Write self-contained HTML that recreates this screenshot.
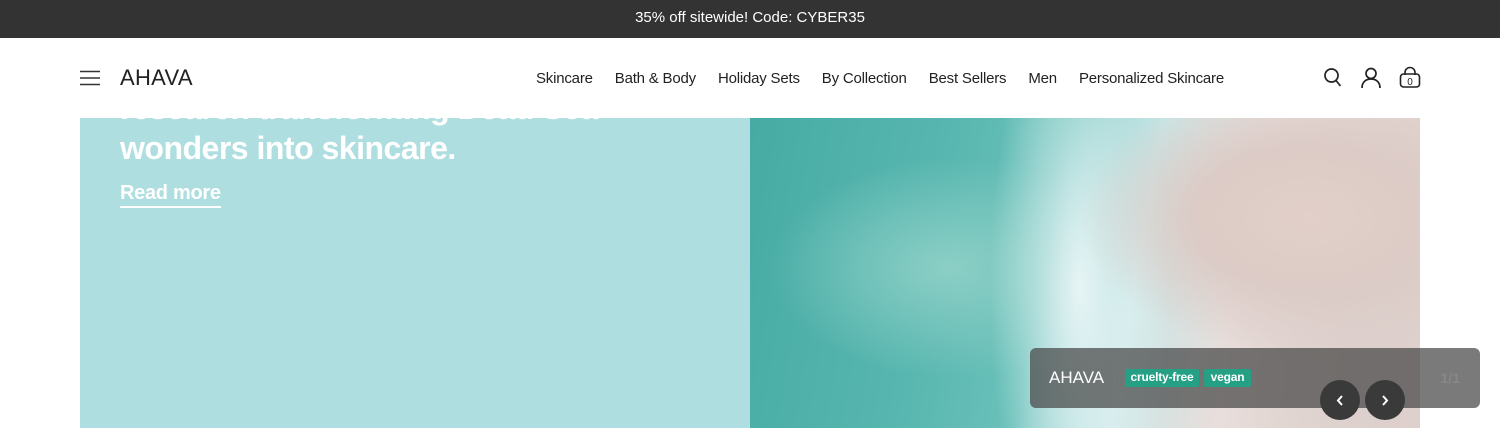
<!DOCTYPE html>
<html><head><meta charset="utf-8"><style>
*{margin:0;padding:0;box-sizing:border-box}
body{width:1500px;height:428px;overflow:hidden;background:#fff;font-family:"Liberation Sans",Arial,sans-serif;position:relative}
.bar{height:38px;background:#333;color:#fff;font-size:15px;text-align:center;line-height:35px}
.hdr{position:absolute;top:38px;left:0;width:1500px;height:80px;background:#fff;z-index:5}
.hdr .nav{position:absolute;top:32px;left:536px;font-size:15px;color:#222;white-space:nowrap;letter-spacing:-0.2px}
.hdr .nav span{margin-right:22px}
.logo{position:absolute;left:120px;top:27px;font-size:22px;letter-spacing:0.3px;color:#222;font-weight:300}
.left{position:absolute;left:80px;top:38px;width:670px;height:390px;background:#afdee0}
.h{position:absolute;left:120px;top:88px;color:#fff;font-weight:bold;font-size:32px;line-height:40px;letter-spacing:-0.5px}
.rm{position:absolute;left:120px;top:183px;color:#fff;font-weight:bold;font-size:20px;border-bottom:2px solid #fff;line-height:21px;padding-bottom:2px;letter-spacing:-0.3px}
.img{position:absolute;left:750px;top:38px;width:670px;height:390px;overflow:hidden;
background:
radial-gradient(ellipse 230px 140px at 560px 180px,#e2cfc9 0%,#dccbc6 50%,rgba(225,215,215,0) 100%),
radial-gradient(ellipse 150px 260px at 620px 330px,#dcd0cc 0%,rgba(220,210,210,0) 100%),
radial-gradient(ellipse 90px 320px at 330px 250px,rgba(240,248,250,.9) 0%,rgba(230,240,240,0) 100%),
radial-gradient(ellipse 180px 110px at 200px 230px,#8ccfc6 0%,rgba(0,0,0,0) 100%),
linear-gradient(100deg,#45aaa3 0%,#58b7b0 30%,#6bc1ba 45%,#c8e6e6 58%,#e8dedb 72%,#e0d0cc 100%)}
.card{position:absolute;left:1030px;top:348px;width:450px;height:60px;background:rgba(70,70,70,.72);border-radius:6px}
.card .b{position:absolute;left:19px;top:20px;color:#fff;font-size:17px}
.tag{position:absolute;top:21px;height:18px;background:#26a085;color:#fff;font-size:12px;font-weight:bold;line-height:17px;text-align:center;border-radius:2px;letter-spacing:-0.2px}
.pg{position:absolute;right:20px;top:22px;color:#888;font-size:14px;font-weight:bold}
.btn{position:absolute;top:380px;width:40px;height:40px;border-radius:50%;background:#3a3a3a}
</style></head><body>
<div class="bar">35% off sitewide! Code: CYBER35</div>
<div class="left"></div>
<div class="h">research transforming Dead Sea<br>wonders into skincare.</div>
<div class="rm">Read more</div>
<div class="img"></div>
<div class="hdr">
<svg style="position:absolute;left:80px;top:32px" width="20" height="16"><path d="M0 1.5H20M0 8H20M0 14.5H20" stroke="#333" stroke-width="1.6"/></svg>
<div class="logo">AHAVA</div>
<div class="nav"><span>Skincare</span><span>Bath &amp; Body</span><span>Holiday Sets</span><span>By Collection</span><span>Best Sellers</span><span>Men</span><span style="margin:0">Personalized Skincare</span></div>
<svg style="position:absolute;left:1323px;top:29px" width="20" height="22" fill="none" stroke="#222" stroke-width="1.7"><circle cx="8.5" cy="8.5" r="6.5"/><path d="M13 13.5L17.5 19"/></svg>
<svg style="position:absolute;left:1360px;top:29px" width="22" height="22" fill="none" stroke="#222" stroke-width="1.7"><circle cx="11" cy="6.5" r="5"/><path d="M2 21C2 15 6 12 11 12S20 15 20 21"/></svg>
<svg style="position:absolute;left:1398px;top:28px" width="24" height="24" fill="none" stroke="#222" stroke-width="1.6"><path d="M7 9V6.5a5 5 0 0 1 10 0V9"/><rect x="2.5" y="8" width="19" height="13" rx="3"/><text x="12" y="19" font-size="10" font-family="Liberation Sans" fill="#222" stroke="none" text-anchor="middle">0</text></svg>
</div>
<div class="card"><div class="b">AHAVA</div><div style="position:absolute;left:84px;top:22px;width:1px;height:16px;background:#777"></div>
<div class="tag" style="left:95px;width:74px">cruelty-free</div><div class="tag" style="left:174px;width:47px">vegan</div><div class="pg">1/1</div></div>
<div class="btn" style="left:1320px"><svg width="40" height="40"><path d="M22 16L18 20.5L22 25" fill="none" stroke="#fff" stroke-width="2"/></svg></div>
<div class="btn" style="left:1365px"><svg width="40" height="40"><path d="M18 16L22 20.5L18 25" fill="none" stroke="#fff" stroke-width="2"/></svg></div>
</body></html>
